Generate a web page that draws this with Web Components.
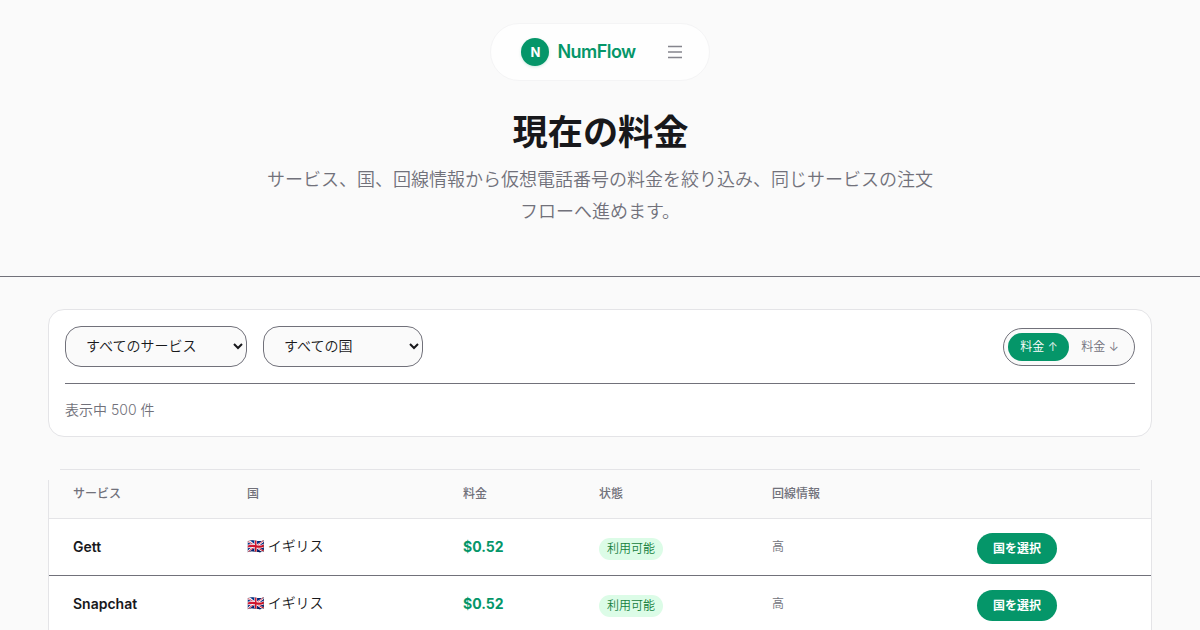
<!DOCTYPE html>
<html lang="ja">
<head>
<meta charset="utf-8">
<title>NumFlow</title>
<style>
html,body{margin:0;height:630px;overflow:hidden}
body{background:#fafafa;color:#18181b;font-family:Inter,"Noto Sans CJK JP",sans-serif;-webkit-font-smoothing:antialiased}
</style>
</head>
<body>
<price-page></price-page>
<script>
const define = (name, html, setup) => {
  const t = document.createElement('template');
  t.innerHTML = html;
  customElements.define(name, class extends HTMLElement {
    constructor() {
      super();
      this.attachShadow({mode: 'open'}).append(t.content.cloneNode(true));
    }
    connectedCallback() { if (setup) setup(this, this.shadowRoot); }
  });
};

define('brand-nav', `<style>
:host{display:flex;box-sizing:border-box;width:220px;height:58px;margin:23px auto 0;padding:0 26px 0 30px;align-items:center;background:#fefefe;border:1px solid #f4f4f5;border-radius:29px}
.mark{width:28px;height:28px;box-sizing:border-box;padding-left:1px;border-radius:50%;background:#059669;color:#fff;font-size:13px;font-weight:700;display:grid;place-items:center;box-shadow:0 1px 3px #05966933}
.name{margin-left:8.5px;font-size:18px;font-weight:600;letter-spacing:-.55px;color:#059669;flex:1;line-height:28px}
svg{display:block}
</style><span class="mark">N</span><span class="name">NumFlow</span>
<svg width="16" height="16" viewBox="0 0 16 16" fill="none" stroke="#85858d" stroke-width="1.4"><path d="M1 2.5h14M1 8h14M1 13.5h14"/></svg>`);

define('page-hero', `<style>
:host{display:block;box-sizing:border-box;height:196px;border-bottom:1px solid #71717a;text-align:center;padding-top:27px}
h1{margin:0;font-size:35.2px;line-height:48px;font-weight:600;padding-left:1px}
p{margin:8px auto 0;width:672px;font-size:18px;line-height:32px;color:#71717a;font-weight:350}
</style><h1><slot name="title"></slot></h1><p><slot></slot></p>`);

define('filter-select', `<style>
:host{display:block}
select{display:block;box-sizing:border-box;width:100%;height:41px;padding:0 0 2px 16px;border:1px solid #71717a;border-radius:16px;background:#fafafa;color:#18181b;font:350 14px Inter,"Noto Sans CJK JP",sans-serif}
</style><select><option></option></select>`, (el, r) => r.querySelector('option').textContent = el.getAttribute('label'));

define('sort-toggle', `<style>
:host{display:flex;box-sizing:border-box;width:132px;height:38px;padding:4px;border:1px solid #71717a;border-radius:19px;background:#fafafa}
span{box-sizing:border-box;width:61px;height:28px;padding-left:1px;border-radius:14px;font-size:12px;font-weight:350;line-height:27px;text-align:center;color:#71717a;white-space:nowrap}
.on{background:#059669;color:#fff}
</style><span class="on">料金 ↑</span><span>料金 ↓</span>`);

define('filter-panel', `<style>
:host{display:block;box-sizing:border-box;height:128px;margin:32px 48px 0;padding:16px;background:#fff;border:1px solid #e4e4e7;border-radius:16px}
.bar{display:flex;gap:16px;align-items:center;padding-bottom:16px;border-bottom:1px solid #71717a}
sort-toggle{margin-left:auto}
.count{margin-top:15px;font-size:14px;line-height:21px;color:#71717a;font-weight:350}
</style><div class="bar"><filter-select style="width:182px" label="すべてのサービス"></filter-select><filter-select style="width:160px" label="すべての国"></filter-select><sort-toggle></sort-toggle></div>
<div class="count"><slot></slot></div>`);

define('state-badge', `<style>
:host{display:block;width:64px;height:22px;border-radius:11px;background:#dcfce7;color:#15803d;font-size:12px;font-weight:350;line-height:22px;text-align:center;margin:3px 0 0 -1px}
</style><slot></slot>`);

define('select-button', `<style>
:host{display:block;width:80px;height:31px;border-radius:16px;background:#059669;color:#fff;font-size:12px;font-weight:600;line-height:31px;text-align:center;margin-top:2px}
</style><slot></slot>`);

define('price-row', `<style>
:host{display:grid;grid-template-columns:174px 216px 137px 172px 205px 1fr;align-items:center;box-sizing:border-box;height:57px;padding-left:24px;border-bottom:1px solid #71717a;background:#fff;font-size:14px}
b{font-weight:600;padding-bottom:2px}
.country{font-weight:350;padding-bottom:4px;letter-spacing:-.1px}
.price{color:#059669;font-weight:700;letter-spacing:0;padding-bottom:2px}
.line{color:#71717a;font-size:12px;font-weight:350;padding-bottom:3px}
</style><b><slot></slot></b><span class="country">🇬🇧 イギリス</span><span class="price">$0.52</span><state-badge>利用可能</state-badge><span class="line">高</span><select-button>国を選択</select-button>`);

define('price-table', `<style>
:host{display:block;margin:32px 48px 0;height:400px;position:relative;background:#fff;border:1px solid #e4e4e7}
/* The frame's top corners stay open */
:host::before,:host::after{content:"";position:absolute;top:-1px;width:12px;height:11px;background:#fafafa}
:host::before{left:-1px}
:host::after{right:-1px}
.head{display:grid;grid-template-columns:174px 216px 137px 172px 205px 1fr;box-sizing:border-box;height:49px;padding:0 0 3px 24px;align-items:center;background:#fafafa;border-bottom:1px solid #e4e4e7;font-size:12px;font-weight:500;color:#71717a}
.head span:nth-child(4){margin-left:-1px}
</style><div class="head"><span>サービス</span><span>国</span><span>料金</span><span>状態</span><span>回線情報</span></div>
<price-row>Gett</price-row><price-row>Snapchat</price-row>`);

define('price-page', `<style>:host{display:flow-root;height:630px;overflow:hidden}</style>
<brand-nav></brand-nav>
<page-hero><span slot="title">現在の料金</span>サービス、国、回線情報から仮想電話番号の料金を絞り込み、同じサービスの注文フローへ進めます。</page-hero>
<filter-panel>表示中 500 件</filter-panel>
<price-table></price-table>`);
</script>
</body>
</html>
